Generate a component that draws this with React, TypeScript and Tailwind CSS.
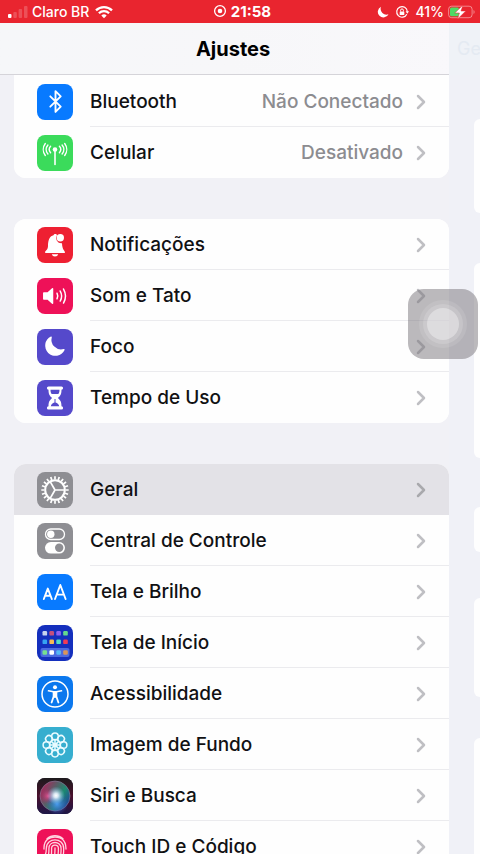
import type { ReactNode } from "react";
import { ChevronRight, Bluetooth } from "lucide-react";

type Row = {
  label: string;
  icon: ReactNode;
  bg: string;
  value?: string;
  active?: boolean;
};

const svg = "h-full w-full";

const AntennaIcon = () => (
  <svg viewBox="0 0 36 36" className={svg} fill="none" stroke="white" strokeWidth="1.4" strokeLinecap="round">
    <circle cx="18" cy="14.5" r="2.3" fill="white" stroke="none" />
    <path d="M18 15v14.5" strokeWidth="1.6" />
    <path d="M13.6 11.300a4.800 4.800 0 0 0 0 6.400M22.400 11.300a4.800 4.800 0 0 1 0 6.400" />
    <path d="M10.900 10a7.200 7.200 0 0 0 0 9M25.100 10a7.200 7.200 0 0 1 0 9" />
    <path d="M8.300 8.500a10 10 0 0 0 0 12M27.700 8.500a10 10 0 0 1 0 12" />
  </svg>
);

const BellIcon = () => (
  <svg viewBox="0 0 36 36" className={svg} fill="white">
    <path d="M8 25.2c0-1.300 3-2.200 3-6.200 0-6.500 2-10 5.500-10.700C17 6.400 19.600 6.600 20 8a5.300 5.300 0 0 0 5 8.200c.2 6.800 3 7.500 3 9 0 .6-.4.800-1 .8H9c-.6 0-1-.2-1-.8z" />
    <path d="M14.800 27.200h6.400a3.300 3 0 0 1-6.400 0z" />
    <circle cx="23.300" cy="10.700" r="3.700" />
  </svg>
);

const SpeakerIcon = () => (
  <svg viewBox="0 0 36 36" className={svg} fill="none" stroke="white" strokeWidth="1.500" strokeLinecap="round">
    <path fill="white" strokeLinejoin="round" d="M6.800 15h4l4.700-4.200v14.400L10.800 21h-4z" />
    <path d="M20 15.200a6 6 0 0 1 0 5.600M23.200 13a10 10 0 0 1 0 10M26.500 11a14 14 0 0 1 0 14" />
  </svg>
);

const MoonIcon = () => (
  <svg viewBox="0 0 36 36" className={svg} fill="white">
    <path d="M14.800 8.200a.7.700 0 0 0-.9-.7 10.200 10.200 0 1 0 13.700 13.500.7.700 0 0 0-.9-.9A9.700 9.700 0 0 1 14.800 8.200z" />
  </svg>
);

const HourglassIcon = () => (
  <svg viewBox="0 0 36 36" className={svg}>
    <path
      fill="white"
      d="M11.500 6.500h13a1.300 1.300 0 0 1 0 3.200c0 4.500-1 6-3.700 8.300 2.700 2.300 3.700 3.800 3.700 8.300a1.300 1.300 0 0 1 0 3.200h-13a1.300 1.300 0 0 1 0-3.200c0-4.500 1-6 3.700-8.300-2.700-2.300-3.700-3.800-3.700-8.300a1.300 1.300 0 0 1 0-3.200z"
    />
    <path fill="#5549cb" d="M13.500 9.700h9c0 2-.4 3.300-1.200 4.300h-6.600c-.8-1-1.200-2.300-1.200-4.300zM17.500 19h1v3.500c2 .5 3.500 2 3.700 3.800h-8.400c.2-1.800 1.700-3.300 3.700-3.800z" />
  </svg>
);

const teeth = Array.from({ length: 24 }, (_, i) => i * 15);

const GearIcon = () => (
  <svg viewBox="0 0 36 36" className={svg} fill="none" stroke="white">
    <circle cx="18" cy="18" r="9.800" strokeWidth="2" />
    {teeth.filter((_, i) => i < 20).map((_, i) => (
      <path key={i} d="M18 7.500V4.300" strokeWidth="1.700" transform={`rotate(${i * 18} 18 18)`} />
    ))}
    {[90, 210, 330].map((a) => (
      <path key={a} d="M18 18V8" strokeWidth="1.700" transform={`rotate(${a} 18 18)`} />
    ))}
  </svg>
);

const TogglesIcon = () => (
  <svg viewBox="0 0 36 36" className={svg}>
    <rect x="8.500" y="6" width="19" height="10.500" rx="5.250" fill="none" stroke="white" strokeWidth="1.300" />
    <circle cx="13.800" cy="11.250" r="3.700" fill="white" />
    <rect x="8" y="19" width="20" height="11.600" rx="5.800" fill="white" />
    <circle cx="22.200" cy="24.800" r="4.200" fill="#8e8e93" />
  </svg>
);

const TextSizeIcon = () => (
  <svg viewBox="0 0 36 36" className={svg} fill="none" stroke="white" strokeWidth="1.900" strokeLinecap="round" strokeLinejoin="round">
    <path d="M6.800 25l4-10.400 4 10.400M8.200 21.700h5.200" />
    <path d="M18 25l5.300-14 5.300 14M19.800 20.600h7" />
  </svg>
);

const apps = [
  ["#c7d3ee", "#c5507c", "#8b62f0", "#64d98c"],
  ["#36a4f2", "#f5bb55", "#4fdcc8", "#ee3b55"],
  ["#77e08f", "#ffffff", "#54b8f5", "#d9955a"],
];

const HomeIcon = () => (
  <svg viewBox="0 0 36 36" className={svg}>
    <rect x="3.500" y="23" width="29" height="9" rx="2" fill="#4c6be0" />
    {apps.map((line, y) =>
      line.map((fill, x) => (
        <rect key={`${x}-${y}`} x={5.500 + x * 6.900} y={[6, 14.500, 25.200][y]} width="4.600" height="4.600" rx="1.200" fill={fill} />
      ))
    )}
  </svg>
);

const AccessibilityIcon = () => (
  <svg viewBox="0 0 36 36" className={svg} fill="none" stroke="white" strokeLinecap="round" strokeLinejoin="round">
    <circle cx="18" cy="18" r="13" strokeWidth="1.500" />
    <circle cx="18" cy="11.200" r="2" fill="white" stroke="none" />
    <path d="M11.500 14.800l5 1h3l5-1" strokeWidth="1.600" />
    <path d="M16.600 16h2.800v4.500l2 6M16.600 16v4.500l-2 6M18 16v5" strokeWidth="1.800" />
  </svg>
);

const FlowerIcon = () => (
  <svg viewBox="0 0 36 36" className={svg} fill="none" stroke="#e9fbff" strokeWidth="1.500">
    {teeth.filter((a) => a % 45 === 0).map((a) => (
      <g key={a} transform={`rotate(${a} 18 18)`}>
        <circle cx="18" cy="9.400" r="3.300" />
        <path d="M18 15.500v-3" />
      </g>
    ))}
    <circle cx="18" cy="18" r="5.400" />
    <circle cx="18" cy="18" r="2" fill="#e9fbff" />
  </svg>
);

const SiriIcon = () => (
  <svg viewBox="0 0 36 36" className={svg}>
    <defs>
      <linearGradient id="siri-back" x1="0" y1="0" x2="0" y2="1">
        <stop offset="0" stopColor="#1c1a1c" />
        <stop offset=".5" stopColor="#4a0f2c" />
        <stop offset="1" stopColor="#1d1748" />
      </linearGradient>
      <linearGradient id="siri-ring" x1="0" y1=".2" x2="1" y2=".8">
        <stop offset="0" stopColor="#b01f58" />
        <stop offset=".35" stopColor="#5f5a66" />
        <stop offset=".65" stopColor="#1c8a70" />
        <stop offset="1" stopColor="#203da0" />
      </linearGradient>
      <radialGradient id="siri-glow">
        <stop offset="0" stopColor="#fff" />
        <stop offset=".25" stopColor="#e8f4ff" stopOpacity=".9" />
        <stop offset="1" stopColor="#7ab8e8" stopOpacity="0" />
      </radialGradient>
      <radialGradient id="siri-blue">
        <stop offset="0" stopColor="#4a9cf0" />
        <stop offset="1" stopColor="#3b55c8" stopOpacity="0" />
      </radialGradient>
      <radialGradient id="siri-pink">
        <stop offset="0" stopColor="#df538f" />
        <stop offset="1" stopColor="#b02060" stopOpacity="0" />
      </radialGradient>
    </defs>
    <rect width="36" height="36" fill="url(#siri-back)" />
    <circle cx="18" cy="18" r="15" fill="url(#siri-ring)" stroke="#8a7f9f" strokeWidth=".6" />
    <circle cx="11" cy="18" r="8" fill="url(#siri-pink)" />
    <circle cx="20" cy="26" r="11" fill="url(#siri-blue)" />
    <circle cx="19" cy="17.500" r="9" fill="url(#siri-glow)" />
  </svg>
);

const FingerprintIcon = () => (
  <svg viewBox="0 0 36 36" className={svg} fill="none" stroke="#ffd5e0" strokeWidth="1.300" strokeLinecap="round">
    <path d="M10 9.800a12 12 0 0 1 16 0" />
    <path d="M7 20c-.5-11 8-12 11-12s11 1 11 12M8.500 25c.8-2 .8-3 .8-5.500 0-11.500 17.400-11.500 17.400 0 0 3 0 5-.6 7" />
    <path d="M11 27.500c1-3 .9-5 .9-8 0-8 12.200-8 12.200 0 0 4 0 6-1 9" />
    <path d="M13.800 29c.9-3 .8-6 .8-9.500 0-4.500 6.800-4.500 6.800 0 0 4 0 7-1.200 10" />
    <path d="M18 19c0 4 0 7-1 10.500" />
  </svg>
);

const groups: Row[][] = [
  [
    { label: "Bluetooth", value: "Não Conectado", bg: "bg-[#087aff]", icon: <Bluetooth size={25} strokeWidth={1.8} color="white" /> },
    { label: "Celular", value: "Desativado", bg: "bg-[#3bdb5b]", icon: <AntennaIcon /> },
  ],
  [
    { label: "Notificações", bg: "bg-[#ee2032]", icon: <BellIcon /> },
    { label: "Som e Tato", bg: "bg-[#ee1158]", icon: <SpeakerIcon /> },
    { label: "Foco", bg: "bg-[#5549cb]", icon: <MoonIcon /> },
    { label: "Tempo de Uso", bg: "bg-[#5549cb]", icon: <HourglassIcon /> },
  ],
  [
    { label: "Geral", bg: "bg-[#8e8e93]", icon: <GearIcon />, active: true },
    { label: "Central de Controle", bg: "bg-[#8e8e93]", icon: <TogglesIcon /> },
    { label: "Tela e Brilho", bg: "bg-[#087aff]", icon: <TextSizeIcon /> },
    { label: "Tela de Início", bg: "bg-[#142fbd]", icon: <HomeIcon /> },
    { label: "Acessibilidade", bg: "bg-[#0b78ee]", icon: <AccessibilityIcon /> },
    { label: "Imagem de Fundo", bg: "bg-[#36aecf]", icon: <FlowerIcon /> },
    { label: "Siri e Busca", bg: "bg-[#24152f]", icon: <SiriIcon /> },
    { label: "Touch ID e Código", bg: "bg-[#ee1158]", icon: <FingerprintIcon /> },
  ],
];

const StatusBar = () => (
  <div className="grid h-[23px] shrink-0 grid-cols-3 items-center bg-[#e9252f] pr-1 pl-2 text-sm font-medium text-white">
    <div className="flex items-center gap-1">
      <svg viewBox="0 0 20 14" className="h-3.5 w-5" fill="white">
        <rect x="0" y="9" width="3.500" height="4" rx="1" />
        <rect x="5.300" y="7" width="3.500" height="6" rx="1" opacity=".2" />
        <rect x="10.600" y="4" width="3.500" height="9" rx="1" opacity=".2" />
        <rect x="16" y="1" width="3.500" height="12" rx="1" opacity=".2" />
      </svg>
      <span className="whitespace-nowrap">Claro BR</span>
      <svg viewBox="0 0 18 13" className="ml-0.5 h-3.5 w-[18px]" fill="none" stroke="white" strokeWidth="2.300">
        <path d="M1 4.800a11.500 11.500 0 0 1 16 0M3.900 7.800a7.300 7.300 0 0 1 10.200 0" />
        <path d="M9 12.800L6.300 10a4 4 0 0 1 5.400 0z" fill="white" stroke="none" />
      </svg>
    </div>
    <div className="flex items-center justify-center gap-1 text-[15px] font-bold">
      <svg viewBox="0 0 14 14" className="size-3.5" fill="none" stroke="white" strokeWidth="1.300">
        <circle cx="7" cy="7" r="5.400" />
        <circle cx="7" cy="7" r="2.300" fill="white" stroke="none" />
      </svg>
      21:58
    </div>
    <div className="flex items-center justify-end gap-1.5">
      <svg viewBox="0 0 12 12" className="size-3" fill="white">
        <path d="M4 .8a5.600 5.600 0 1 0 7.500 7.400A5.800 5.800 0 0 1 4 .8z" />
      </svg>
      <svg viewBox="0 0 14 14" className="size-3.5" fill="none" stroke="white" strokeWidth="1.200">
        <path d="M11.800 9.200A5.300 5.300 0 1 1 12.300 6.500" />
        <path d="M10.600 6.300h3.400l-1.700 2.400z" fill="white" stroke="none" />
        <rect x="4.700" y="6.400" width="4.600" height="3.600" rx=".5" fill="white" stroke="none" />
        <path d="M5.600 6.500V5.300a1.400 1.400 0 0 1 2.800 0v1.200" strokeWidth="1" />
      </svg>
      <span>41%</span>
      <svg viewBox="0 0 28 14" className="-ml-0.5 h-3.5 w-7">
        <rect x=".6" y="1.200" width="23.500" height="11.500" rx="3" fill="none" stroke="white" strokeOpacity=".45" />
        <path d="M25.500 5v4c1.500-.6 1.500-3.400 0-4z" fill="white" opacity=".45" />
        <rect x="2" y="2.600" width="9" height="8.700" rx="1.500" fill="#4fd964" />
        <path d="M15 0L6.800 8h4.600L9.600 14l8.200-8h-4.800z" fill="white" stroke="#e9252f" strokeWidth=".5" />
      </svg>
    </div>
  </div>
);

const SettingsRow = ({ row, last }: { row: Row; last: boolean }) => (
  <li>
    <button
      className={`flex h-[51px] w-full items-center pl-[23px] text-left ${row.active ? "bg-[#e3e2e7]" : "bg-[#fefefe]"}`}
    >
      <span className={`mr-[17px] flex size-9 shrink-0 items-center justify-center overflow-hidden rounded-lg ${row.bg}`}>
        {row.icon}
      </span>
      <span
        className={`flex h-full flex-1 items-center justify-between border-b pt-0.5 pr-4 text-[19px] font-medium text-[#111113] ${
          last || row.active ? "border-transparent" : "border-[#ebebee]"
        }`}
      >
        {row.label}
        <span className="flex items-center gap-1.5 text-[#8c8c90]">
          {row.value}
          <ChevronRight size={24} strokeWidth={2.5} color={row.active ? "#a9a9ad" : "#bfbfc3"} />
        </span>
      </span>
    </button>
  </li>
);

export default function App() {
  return (
    <div className="relative flex h-screen flex-col overflow-hidden bg-[#f1f1f6] font-['Inter','Liberation_Sans',sans-serif]">
      <StatusBar />
      <div className="flex min-h-0 flex-1">
        <main className="flex-1">
          <header className="mr-[-3px] flex h-[52px] items-center justify-center border-b border-[#d5d4d9] bg-linear-to-r from-[#f6f7f9] via-[#f7f7f9] to-[#f9f8fb] pl-[14px]">
            <h1 className="text-xl font-bold text-black">Ajustes</h1>
          </header>
          <div className="flex flex-col gap-[41px] pl-[14px]">
            {groups.map((rows, i) => (
              <ul key={i} className={`overflow-hidden bg-[#fefefe] ${i === 0 ? "rounded-b-xl pt-px" : "rounded-xl"}`}>
                {rows.map((row, j) => (
                  <SettingsRow key={row.label} row={row} last={j === rows.length - 1} />
                ))}
              </ul>
            ))}
          </div>
        </main>

        {/* next page sliding in */}
        <aside className="w-[31px] overflow-hidden bg-[#f0f1f7]">
          <div className="h-[52px] overflow-hidden bg-[#eff2f7] pt-3 pl-2 text-lg whitespace-nowrap text-[#e4eaf2]">Geral</div>
          <div className="flex flex-col pt-[44px] pl-[25px]">
            <div className="mb-[50px] h-[94px] rounded-l-xl bg-[#fefefe]" />
            <div className="mb-[49px] h-[195px] rounded-l-xl bg-[#fefefe]" />
            <div className="mb-[46px] h-[45px] rounded-l-xl bg-[#fefefe]" />
            <div className="mb-[41px] h-[99px] rounded-l-xl bg-[#fefefe]" />
            <div className="h-[150px] rounded-l-xl bg-[#fefefe]" />
          </div>
        </aside>
      </div>

      <button
        aria-label="AssistiveTouch"
        className="absolute top-[289px] right-[2px] flex size-[70px] items-center justify-center rounded-2xl bg-[#77747a]/50"
      >
        <span className="flex size-12 items-center justify-center rounded-full bg-white/10">
          <span className="flex size-10 items-center justify-center rounded-full bg-white/15">
            <span className="size-8 rounded-full bg-white/35" />
          </span>
        </span>
      </button>
    </div>
  );
}
